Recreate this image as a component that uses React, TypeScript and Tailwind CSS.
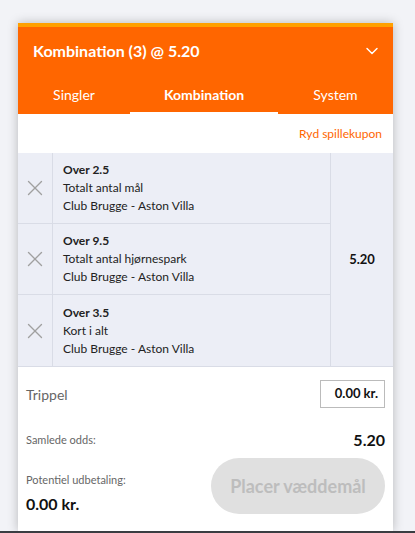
import { ChevronDown, X } from 'lucide-react';

const legs = [
  { pick: 'Over 2.5', market: 'Totalt antal mål', match: 'Club Brugge - Aston Villa' },
  { pick: 'Over 9.5', market: 'Totalt antal hjørnespark', match: 'Club Brugge - Aston Villa' },
  { pick: 'Over 3.5', market: 'Kort i alt', match: 'Club Brugge - Aston Villa' },
];

export default function App() {
  return (
    <div
      className="h-[533px] overflow-hidden bg-[#f2f3f7] pt-[23px] flex flex-col"
      style={{ fontFamily: 'Lato, "Noto Sans", Arial, sans-serif' }}
    >
      <div className="ml-[18px] w-[375px] bg-white shadow-[0_0_10px_rgba(0,0,0,0.25)] flex flex-col flex-1">
        {/* header */}
        <div className="border-t-[4px] border-[#ffa000] bg-[#ff6600] text-white">
          <div className="h-[48px] flex items-center justify-between pl-[15px] pr-[11px]">
            <span className="text-[16px] font-bold">Kombination (3) @ 5.20</span>
            <ChevronDown className="w-[20px] h-[20px]" strokeWidth={1.75} />
          </div>
          <div className="flex h-[39px] text-[14px]">
            <div className="w-[112px] flex items-center justify-center">Singler</div>
            <div className="w-[148px] flex items-center justify-center font-bold relative">
              Kombination
              <span className="absolute left-0 right-0 bottom-0 h-[2px] bg-white" />
            </div>
            <div className="flex-1 flex items-center justify-center">System</div>
          </div>
        </div>

        <div className="h-[39px] flex items-center justify-end pr-[11px]">
          <span className="text-[12px] text-[#ff6600]">Ryd spillekupon</span>
        </div>

        {/* legs */}
        <div className="flex bg-[#eceef6] border-b border-[#d9dce6]">
          <div className="flex-1 flex flex-col">
            {legs.map((leg, i) => (
              <div
                key={leg.pick}
                className={`flex h-[71px] ${i < legs.length - 1 ? 'border-b border-[#d9dce6]' : ''}`}
              >
                <div className="w-[35px] border-r border-[#d9dce6] flex items-center justify-center">
                  <X className="w-[26px] h-[26px] text-[#a0a0a0]" strokeWidth={1.25} />
                </div>
                <div className="pl-[10px] flex flex-col justify-center text-[12px] leading-[18px] text-[#222]">
                  <span className="font-bold">{leg.pick}</span>
                  <span>{leg.market}</span>
                  <span>{leg.match}</span>
                </div>
              </div>
            ))}
          </div>
          <div className="w-[63px] border-l border-[#d9dce6] flex items-center justify-center">
            <span className="text-[13px] font-bold text-[#111]">5.20</span>
          </div>
        </div>

        {/* stake + summary */}
        <div className="px-[8px] pt-[13px] flex flex-col">
          <div className="flex items-center justify-between">
            <span className="text-[14px] text-[#666]">Trippel</span>
            <div className="w-[65px] h-[28px] border border-[#bbb] flex items-center justify-end pr-[6px] text-[13px] font-bold text-[#111]">
              0.00 kr.
            </div>
          </div>
          <div className="flex items-center justify-between mt-[20px]">
            <span className="text-[11px] text-[#666]">Samlede odds:</span>
            <span className="text-[16px] font-bold text-[#111]">5.20</span>
          </div>
          <div className="flex items-start justify-between mt-[6px]">
            <div className="flex flex-col pt-[14px]">
              <span className="text-[11px] text-[#666] leading-[16px]">Potentiel udbetaling:</span>
              <span className="text-[16px] font-bold text-[#111] mt-[4px]">0.00 kr.</span>
            </div>
            <button className="w-[174px] h-[56px] rounded-full bg-[#e0e0e0] text-[#bdbdbd] text-[18px] font-bold">
              Placer væddemål
            </button>
          </div>
        </div>
      </div>
      <div className="h-[2px] bg-[#3a3d42] shrink-0" />
    </div>
  );
}
